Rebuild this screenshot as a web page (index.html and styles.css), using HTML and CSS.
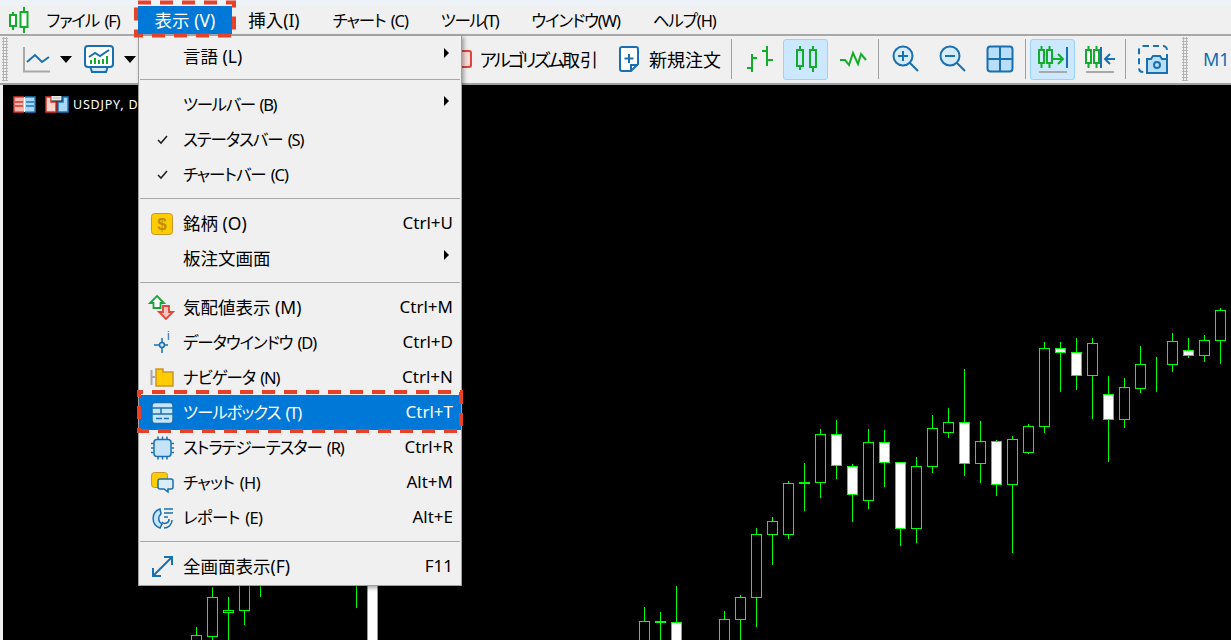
FILE: index.html
```html
<!DOCTYPE html>
<html lang="ja">
<head>
    <meta charset="UTF-8">
    <meta name="viewport" content="width=device-width, initial-scale=1.0">
    <title>MetaTrader</title>
    <link rel="stylesheet" href="styles.css">
</head>
<body>
    <div id="app">
        <div class="top-strip"></div>

        <nav class="menubar">
            <svg class="app-logo" width="20" height="26" viewBox="0 0 20 26">
                <path class="ic-green" d="M4 5V23M15 0V26"/>
                <rect class="ic-green ic-fill-white" x="1" y="8" width="6" height="11"/>
                <rect class="ic-green ic-fill-white" x="11.500" y="5" width="7" height="15"/>
            </svg>
            <span class="menubar-item menubar-first t-kana">ファイル (F)</span>
            <span class="menubar-item t-kanji is-open">表示 (V)</span>
            <span class="menubar-item t-kanji">挿入(I)</span>
            <span class="menubar-item t-kana">チャート (C)</span>
            <span class="menubar-item t-tight">ツール(T)</span>
            <span class="menubar-item t-kana">ウインドウ(W)</span>
            <span class="menubar-item t-kana">ヘルプ(H)</span>
        </nav>

        <div class="toolbar">
            <div class="grip"></div>
            <div class="tool">
                <svg width="30" height="30" viewBox="0 0 30 30">
                    <path class="ic-grey" d="M4 3V27.500H30"/>
                    <path class="ic-blue" d="M7 18L15 11L22 18L29 13"/>
                </svg>
            </div>
            <div class="drop-arrow"></div>
            <div class="tool">
                <svg width="34" height="30" viewBox="0 0 34 30">
                    <path class="ic-blue ic-fill-pale" d="M8 22H26L24 28H10Z"/>
                    <rect class="ic-blue ic-fill-white" x="3" y="2" width="28" height="21" rx="3"/>
                    <path class="ic-blue" d="M7 13L13 9L18 12L27 6"/>
                    <path class="ic-green" d="M9 20V16M13 20V14M17 20V16M21 20V15M25 20V12"/>
                </svg>
            </div>
            <div class="drop-arrow"></div>
            <div class="tb-hidden"></div>
            <div class="tool-text">
                <svg width="20" height="30" viewBox="0 0 20 30">
                    <rect class="ic-red" x="1" y="7" width="18" height="16" rx="2"/>
                </svg>
                <span><span class="kana-narrow">アルゴリズム</span>取引</span>
            </div>
            <div class="tool-text tool-order">
                <svg width="22" height="28" viewBox="0 0 22 28">
                    <path class="ic-blue ic-fill-white" d="M4 2H18Q20 2 20 4V19L13 26H4Q2 26 2 24V4Q2 2 4 2Z"/>
                    <path class="ic-blue" d="M11 9V18M6.500 13.500H15.500M13 26V20H20"/>
                </svg>
                <span>新規注文</span>
            </div>
            <div class="tb-sep"></div>
            <div class="tool">
                <svg width="30" height="30" viewBox="0 0 30 30">
                    <path class="ic-green" d="M8 10V28M3 24H8M8 14H13M23 2V22M18 7H23M23 16H29"/>
                </svg>
            </div>
            <div class="tool is-active">
                <svg width="30" height="30" viewBox="0 0 30 30">
                    <path class="ic-green" d="M9 2V26M22 2V28"/>
                    <rect class="ic-green ic-fill-active" x="6" y="6" width="6" height="16"/>
                    <rect class="ic-green ic-fill-active" x="19" y="6" width="6" height="17"/>
                </svg>
            </div>
            <div class="tool">
                <svg width="30" height="30" viewBox="0 0 30 30">
                    <path class="ic-green" d="M2 16L7 16L11 21L15 9L20 20L23 10L28 16"/>
                </svg>
            </div>
            <div class="tb-sep"></div>
            <div class="tool">
                <svg width="30" height="30" viewBox="0 0 30 30">
                    <circle class="ic-blue ic-fill-pale" cx="12" cy="12" r="9.500"/>
                    <path class="ic-blue" d="M19 19L27 27M7 12H17M12 7V17"/>
                </svg>
            </div>
            <div class="tool">
                <svg width="30" height="30" viewBox="0 0 30 30">
                    <circle class="ic-blue ic-fill-pale" cx="12" cy="12" r="9.500"/>
                    <path class="ic-blue" d="M19 19L27 27M7 12H17"/>
                </svg>
            </div>
            <div class="tool">
                <svg width="30" height="30" viewBox="0 0 30 30">
                    <rect class="ic-blue ic-fill-sky" x="2.500" y="2.500" width="25" height="25" rx="3"/>
                    <path class="ic-blue" d="M15 2.500V27.500M2.500 15H27.500"/>
                </svg>
            </div>
            <div class="tb-sep"></div>
            <div class="tool is-active">
                <svg width="32" height="30" viewBox="0 0 32 30">
                    <path class="ic-green" d="M4.500 2V24M12.500 2V24M16 15H25M21 10L26 15L21 20"/>
                    <rect class="ic-green ic-fill-active" x="2" y="6" width="5" height="13"/>
                    <rect class="ic-green ic-fill-active" x="10" y="6" width="5" height="13"/>
                    <path class="ic-blue" d="M30 3V24"/>
                    <path class="ic-grey" d="M2 28H30"/>
                </svg>
            </div>
            <div class="tool">
                <svg width="32" height="30" viewBox="0 0 32 30">
                    <path class="ic-green" d="M4.500 2V24M12.500 2V24"/>
                    <rect class="ic-green ic-fill-white" x="2" y="6" width="5" height="13"/>
                    <rect class="ic-green ic-fill-white" x="10" y="6" width="5" height="13"/>
                    <path class="ic-blue" d="M17 3V24M31 15H21M26 10L21 15L26 20"/>
                    <path class="ic-grey" d="M2 28H30"/>
                </svg>
            </div>
            <div class="tb-sep"></div>
            <div class="tool">
                <svg width="32" height="30" viewBox="0 0 32 30">
                    <rect class="ic-blue ic-dashed" x="2" y="2" width="28" height="26" rx="4"/>
                    <path class="ic-blue ic-fill-sky" d="M10 15H14L16 12H23L25 15H30V29H10Z"/>
                    <circle class="ic-blue" cx="20" cy="21" r="3"/>
                </svg>
            </div>
            <div class="grip grip-right"></div>
            <span class="timeframe">M1</span>
        </div>

        <div class="workspace">
            <div class="chart">
                <svg class="candles" width="1228" height="555" viewBox="3 85 1228 555">
                    <path class="wick" d="M196.500 627V640M212.500 587V640M228.500 597V640M244.500 580V625M260.500 580V597M356.500 580V608M644.500 607V640M660.500 612V640M676.500 586V640M724.500 611V640M740.500 595V640M756.500 528V627M772.500 517V565M788.500 481V539M804.500 463V511M820.500 429V498M836.500 420V479M852.500 464V522M868.500 429V509M884.500 430V487M900.500 462V546M916.500 457V543M932.500 415V473M948.500 408V438M964.500 369V476M980.500 421V483M996.500 440V496M1012.500 436V553M1028.500 424V454M1044.500 342V433M1060.500 342V392M1076.500 338V390M1092.500 338V419M1108.500 376V462M1124.500 378V428M1140.500 346V393M1156.500 357V392M1172.500 333V372M1188.500 338V358M1204.500 335V362M1220.500 308V364"/>
                    <g class="body-up">
                        <rect x="191.500" y="635.500" width="10" height="20"/>
                        <rect x="207.500" y="597.500" width="10" height="39"/>
                        <rect x="223.500" y="610.500" width="10" height="2"/>
                        <rect x="239.500" y="570.500" width="10" height="40"/>
                        <rect x="639.500" y="621.500" width="10" height="30"/>
                        <rect x="719.500" y="619.500" width="10" height="30"/>
                        <rect x="735.500" y="597.500" width="10" height="22"/>
                        <rect x="751.500" y="534.500" width="10" height="63"/>
                        <rect x="767.500" y="521.500" width="10" height="13"/>
                        <rect x="783.500" y="483.500" width="10" height="51"/>
                        <rect x="815.500" y="434.500" width="10" height="48"/>
                        <rect x="863.500" y="442.500" width="10" height="58"/>
                        <rect x="911.500" y="466.500" width="10" height="62"/>
                        <rect x="927.500" y="428.500" width="10" height="38"/>
                        <rect x="943.500" y="422.500" width="10" height="10"/>
                        <rect x="975.500" y="441.500" width="10" height="22"/>
                        <rect x="1007.500" y="439.500" width="10" height="45"/>
                        <rect x="1023.500" y="426.500" width="10" height="26"/>
                        <rect x="1039.500" y="348.500" width="10" height="78"/>
                        <rect x="1087.500" y="343.500" width="10" height="32"/>
                        <rect x="1119.500" y="387.500" width="10" height="32"/>
                        <rect x="1135.500" y="364.500" width="10" height="24"/>
                        <rect x="1151.500" y="364.500" width="10" height="0"/>
                        <rect x="1167.500" y="341.500" width="10" height="23"/>
                        <rect x="1199.500" y="340.500" width="10" height="15"/>
                        <rect x="1215.500" y="310.500" width="10" height="30"/>
                    </g>
                    <g class="body-down">
                        <rect x="367.500" y="570.500" width="10" height="90"/>
                        <rect x="655.500" y="621.500" width="10" height="1"/>
                        <rect x="671.500" y="622.500" width="10" height="30"/>
                        <rect x="799.500" y="482.500" width="10" height="1"/>
                        <rect x="831.500" y="434.500" width="10" height="31"/>
                        <rect x="847.500" y="466.500" width="10" height="28"/>
                        <rect x="879.500" y="442.500" width="10" height="20"/>
                        <rect x="895.500" y="462.500" width="10" height="66"/>
                        <rect x="959.500" y="422.500" width="10" height="41"/>
                        <rect x="991.500" y="441.500" width="10" height="43"/>
                        <rect x="1055.500" y="348.500" width="10" height="4"/>
                        <rect x="1071.500" y="352.500" width="10" height="23"/>
                        <rect x="1103.500" y="394.500" width="10" height="25"/>
                        <rect x="1183.500" y="350.500" width="10" height="5"/>
                    </g>
                </svg>
                <div class="chart-head">
                    <svg width="23" height="17" viewBox="0 0 23 17">
                        <rect x="1" y="1" width="21" height="15" fill="#fff"/>
                        <path fill="#f7b7b0" d="M2 2H11V15H2Z"/>
                        <path fill="#a9d8f7" d="M12 2H21V15H12Z"/>
                        <path fill="none" stroke="#d9342b" stroke-width="1.500" d="M11 1H1V16H11M2 6H10M2 10H10"/>
                        <path fill="none" stroke="#1a77bd" stroke-width="1.500" d="M12 1H22V16H12M13 6H21M13 10H21"/>
                    </svg>
                    <svg width="24" height="17" viewBox="0 0 24 17">
                        <path fill="#fcd5d0" stroke="#d9342b" stroke-width="1.500" d="M1 1H6V6H11V16H1Z"/>
                        <path fill="#a9d8f7" stroke="#1a77bd" stroke-width="1.500" d="M13 6H18V1H23V16H13Z"/>
                        <rect x="7" y="0" width="9" height="4" fill="#d0d0d0" stroke="#fff"/>
                    </svg>
                    <span class="chart-title">USDJPY, Daily</span>
                </div>
            </div>
        </div>

        <div class="menu">
            <div class="menu-row">
                <span class="menu-icon"></span><span class="menu-label t-kanji">言語 (L)</span><span class="menu-arrow"></span>
            </div>
            <div class="menu-sep"></div>
            <div class="menu-row">
                <span class="menu-icon"></span><span class="menu-label t-tight">ツールバー (B)</span><span class="menu-arrow"></span>
            </div>
            <div class="menu-row">
                <span class="menu-icon">
                    <svg width="28" height="28" viewBox="0 0 28 28"><path class="ic-check" d="M10 14L13 17L19 10"/></svg>
                </span><span class="menu-label t-kana">ステータスバー (S)</span>
            </div>
            <div class="menu-row">
                <span class="menu-icon">
                    <svg width="28" height="28" viewBox="0 0 28 28"><path class="ic-check" d="M10 14L13 17L19 10"/></svg>
                </span><span class="menu-label t-kana">チャートバー (C)</span>
            </div>
            <div class="menu-sep"></div>
            <div class="menu-row">
                <span class="menu-icon">
                    <svg width="28" height="28" viewBox="0 0 28 28">
                        <rect x="3.500" y="3.500" width="21" height="21" rx="3" fill="#ffcc00" stroke="#c9952c"/>
                        <text class="ic-dollar" x="14" y="20" text-anchor="middle">$</text>
                    </svg>
                </span><span class="menu-label t-kanji">銘柄 (O)</span><span class="menu-key">Ctrl+U</span>
            </div>
            <div class="menu-row">
                <span class="menu-icon"></span><span class="menu-label t-kanji">板注文画面</span><span class="menu-arrow"></span>
            </div>
            <div class="menu-sep"></div>
            <div class="menu-row">
                <span class="menu-icon">
                    <svg width="28" height="28" viewBox="0 0 28 28">
                        <path fill="#fff" stroke="#18a53a" stroke-width="1.800" d="M9 2L16 9H12.500V14H5.500V9H2Z"/>
                        <path fill="#ffc4be" stroke="#e2443c" stroke-width="1.800" d="M15 12H21V18H25L18 25L11 18H15Z"/>
                    </svg>
                </span><span class="menu-label t-kanji">気配値表示 (M)</span><span class="menu-key">Ctrl+M</span>
            </div>
            <div class="menu-row">
                <span class="menu-icon">
                    <svg width="28" height="28" viewBox="0 0 28 28">
                        <path class="ic-blue-thin" d="M6 16H20M14 9V24"/>
                        <circle cx="14" cy="16" r="2.500" fill="#cfe8fb" stroke="#1a6fb0" stroke-width="1.500"/>
                        <text class="ic-info" x="19" y="11">i</text>
                    </svg>
                </span><span class="menu-label t-kana">データウインドウ (D)</span><span class="menu-key">Ctrl+D</span>
            </div>
            <div class="menu-row">
                <span class="menu-icon">
                    <svg width="28" height="28" viewBox="0 0 28 28">
                        <path class="ic-grey" d="M3.500 6V21M3.500 13H7"/>
                        <path fill="#ffcc00" stroke="#c9952c" stroke-width="1.500" d="M8 5H15V8H25V22H8Z"/>
                    </svg>
                </span><span class="menu-label t-kana">ナビゲータ (N)</span><span class="menu-key">Ctrl+N</span>
            </div>
            <div class="menu-row is-selected">
                <span class="menu-icon">
                    <svg width="28" height="28" viewBox="0 0 28 28">
                        <rect x="4" y="3.500" width="21" height="21" rx="3" fill="#c5e4fa" stroke="#1a6fb0" stroke-width="1.500"/>
                        <path class="ic-blue-thin" d="M4 9H25M4 15H25M13 9V15M8 19.500H14M16 19.500H21"/>
                    </svg>
                </span><span class="menu-label t-kana">ツールボックス (T)</span><span class="menu-key">Ctrl+T</span>
            </div>
            <div class="menu-row">
                <span class="menu-icon">
                    <svg width="28" height="28" viewBox="0 0 28 28">
                        <rect x="6" y="5.500" width="17" height="17" rx="3" fill="#c5e4fa" stroke="#1a6fb0" stroke-width="1.500"/>
                        <path class="ic-blue-thin" d="M10 2.500V5M14.500 2.500V5M19 2.500V5M10 23V25.500M14.500 23V25.500M19 23V25.500M3 9.500H5.500M3 14H5.500M3 18.500H5.500M23.500 9.500H26M23.500 14H26M23.500 18.500H26"/>
                    </svg>
                </span><span class="menu-label t-kana">ストラテジーテスター (R)</span><span class="menu-key">Ctrl+R</span>
            </div>
            <div class="menu-row">
                <span class="menu-icon">
                    <svg width="28" height="28" viewBox="0 0 28 28">
                        <rect x="3.500" y="3.500" width="16" height="15" rx="3" fill="#ffcc00" stroke="#c9952c"/>
                        <path fill="#dcedfa" stroke="#1a6fb0" stroke-width="1.500" d="M12 10H23Q25 10 25 12V18Q25 20 23 20H20V23L16 20H12Q10 20 10 18V12Q10 10 12 10Z"/>
                    </svg>
                </span><span class="menu-label t-short">チャット (H)</span><span class="menu-key">Alt+M</span>
            </div>
            <div class="menu-row">
                <span class="menu-icon">
                    <svg width="28" height="28" viewBox="0 0 28 28">
                        <path fill="#c5e4fa" stroke="#1a6fb0" stroke-width="1.500" d="M12 5A10 10 0 0 0 12 24L14 20A6 6 0 0 1 13 10Z"/>
                        <path class="ic-blue-thin" d="M16 5H25M16 9H25M16 13H20M24 16A8 8 0 0 1 16 24M14 18A4 4 0 0 0 21 15"/>
                    </svg>
                </span><span class="menu-label t-short">レポート (E)</span><span class="menu-key">Alt+E</span>
            </div>
            <div class="menu-sep"></div>
            <div class="menu-row">
                <span class="menu-icon">
                    <svg width="28" height="28" viewBox="0 0 28 28">
                        <path class="ic-blue-thin ic-thick" d="M5 23L24 4M16 4H24V12M5 15V23H13"/>
                    </svg>
                </span><span class="menu-label t-kanji">全画面表示(F)</span><span class="menu-key">F11</span>
            </div>
        </div>

        <svg class="callout callout-tab" width="102" height="38">
            <rect x="2" y="2.500" width="98" height="33"/>
        </svg>
        <svg class="callout callout-row" width="328" height="45">
            <rect x="3" y="3" width="322" height="39"/>
        </svg>
    </div>
</body>
</html>
```

FILE: styles.css
```css
* {
    box-sizing: border-box;
}
body {
    margin: 0;
    background-color: #f0f0f0;
    overflow: hidden;
}
#app {
    position: relative;
    display: flex;
    flex-direction: column;
    width: 1231px;
    height: 640px;
    overflow: hidden;
    color: #000;
    font-family: "Noto Sans", "Noto Sans CJK JP", sans-serif;
    font-size: 16.5px;
    font-feature-settings: "palt";
}
svg {
    display: block;
    flex: none;
}

/* the reference font has wide kanji and narrow kana */
.t-kanji {
    font-size: 17.5px;
}
.t-kana {
    letter-spacing: -1.100px;
    word-spacing: 2px;
}
.t-tight {
    letter-spacing: -1.400px;
    word-spacing: 2px;
}
.t-short {
    letter-spacing: -0.700px;
    word-spacing: 2px;
}
.kana-narrow {
    letter-spacing: -2.700px;
}

/* title strip + menu bar */
.top-strip {
    height: 5px;
    background-color: #eef3f9;
}
.menubar {
    display: flex;
    align-items: center;
    height: 31px;
    padding-left: 9px;
    background-color: #f0f0f0;
    border-bottom: 2px solid #a8a8a8;
}
.app-logo {
    margin-right: 1px;
}
.menubar-item {
    display: flex;
    align-items: center;
    height: 28px;
    padding: 0 16.500px;
    white-space: nowrap;
}
.menubar-first {
    margin-right: 2px;
}
.menubar-item.is-open {
    background-color: #0078d7;
    color: #fff;
}

/* toolbar */
.toolbar {
    display: flex;
    align-items: center;
    height: 49px;
    padding: 1px 0 2px 2px;
    background-color: #f0f0f0;
    border-bottom: 2px solid #a0a0a0;
    white-space: nowrap;
}
.grip {
    align-self: stretch;
    width: 6px;
    margin-right: 4px;
    background-image: radial-gradient(#b4b4b4 1px, transparent 1.200px);
    background-size: 3px 3px;
}
.grip-right {
    margin: 0 15px 0 5px;
}
.tool {
    display: flex;
    align-items: center;
    justify-content: center;
    width: 45px;
    height: 41px;
    margin-right: 2px;
    border: 1px solid transparent;
    border-radius: 3px;
}
.tool.is-active {
    background-color: #cce8ff;
    border-color: #99d1ff;
}
.drop-arrow {
    width: 0;
    height: 0;
    margin: 0 4px 0 1px;
    border-left: 6px solid transparent;
    border-right: 6px solid transparent;
    border-top: 7px solid #000;
}
.tb-hidden {
    width: 311px;
}
.tool-text {
    display: flex;
    align-items: center;
    gap: 8px;
    width: 156px;
    padding-left: 1px;
    margin-right: 2px;
    font-size: 18px;
}
.tool-order {
    width: 119px;
    padding-left: 9px;
    gap: 9px;
}
.tb-sep {
    align-self: center;
    width: 1px;
    height: 40px;
    margin: 0 4px 0 1px;
    background-color: #a0a0a0;
}
.timeframe {
    color: #0f6cb0;
    font-size: 18px;
}

/* icon strokes */
.ic-green,
.ic-blue,
.ic-grey,
.ic-red,
.ic-blue-thin,
.ic-check {
    fill: none;
    stroke-width: 2;
}
.ic-green {
    stroke: #12ad2b;
}
.ic-blue {
    stroke: #1a6fb0;
}
.ic-grey {
    stroke: #a8a8a8;
}
.ic-red {
    stroke: #e0453c;
    fill: #fbdcd9;
}
.ic-blue-thin {
    stroke: #1a6fb0;
    stroke-width: 1.500;
}
.ic-thick {
    stroke-width: 2;
}
.ic-check {
    stroke: #222;
    stroke-width: 1.600;
}
.ic-fill-white {
    fill: #fff;
}
.ic-fill-pale {
    fill: #d5ebfb;
}
.ic-fill-sky {
    fill: #b8defa;
}
.ic-fill-active {
    fill: #cce8ff;
}
.ic-dashed {
    stroke-dasharray: 6 4;
}
.ic-dollar {
    fill: #c48a14;
    font-family: "Liberation Sans", sans-serif;
    font-size: 17px;
    font-weight: bold;
}
.ic-info {
    fill: #1a6fb0;
    font-family: "Liberation Sans", sans-serif;
    font-size: 12px;
}

/* chart */
.workspace {
    flex: 1;
    padding-left: 3px;
    background-color: #f0f0f0;
}
.chart {
    position: relative;
    height: 100%;
    background-color: #000;
}
.candles {
    position: absolute;
    top: 0;
    left: 0;
    shape-rendering: crispEdges;
}
.wick {
    fill: none;
    stroke: #00ff00;
}
.body-up rect {
    fill: #000;
    stroke: #00ff00;
}
.body-down rect {
    fill: #fff;
    stroke: #00ff00;
}
.chart-head {
    position: absolute;
    top: 11px;
    left: 10px;
    display: flex;
    align-items: center;
    gap: 9px;
}
.chart-title {
    margin-left: -5px;
    color: #fff;
    font-size: 12.500px;
    letter-spacing: 0.800px;
    line-height: 17px;
    white-space: nowrap;
}

/* open menu */
.menu {
    position: absolute;
    top: 35px;
    left: 138px;
    width: 324px;
    height: 551px;
    padding: 3px 0 0;
    background-color: #f0f0f0;
    border: 1px solid #a0a0a0;
    box-shadow: 2px 2px 4px rgba(0, 0, 0, 0.35);
}
.menu-row {
    display: flex;
    align-items: center;
    height: 35px;
    padding: 0 8px 0 9px;
    white-space: nowrap;
}
.menu-row:first-child {
    height: 34px;
}
.menu-row.is-selected {
    background-color: #0078d7;
    color: #fff;
}
.menu-icon {
    width: 28px;
    height: 28px;
    margin-right: 7px;
}
.menu-label {
    margin-top: -2px;
}
.menu-key {
    margin: -2px 0 0 auto;
    font-size: 17px;
}
.menu-arrow {
    width: 0;
    height: 0;
    margin: 0 4px 7px auto;
    border-top: 5.500px solid transparent;
    border-bottom: 5.500px solid transparent;
    border-left: 5px solid #000;
}
.menu-sep {
    height: 1px;
    margin: 6px 1px 7px;
    background-color: #a8a8a8;
}

/* red annotation frames over the screenshot */
.callout {
    position: absolute;
}
.callout rect {
    fill: none;
    stroke: #e8412a;
    stroke-width: 4;
    stroke-dasharray: 13 9;
}
.callout-tab {
    top: 0;
    left: 134px;
}
.callout-tab rect {
    stroke-dashoffset: -2;
}
.callout-row {
    top: 389px;
    left: 136px;
}
.callout-row rect {
    stroke-dashoffset: 9;
}
```
